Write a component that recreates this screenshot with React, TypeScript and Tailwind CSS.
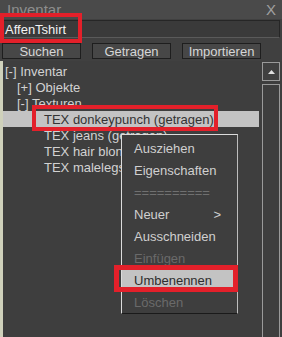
export default function App() {
  const tree = [
    { label: '[-] Inventar', indent: 'pl-[2px]' },
    { label: '[+] Objekte', indent: 'pl-[14px]' },
    { label: '[-] Texturen', indent: 'pl-[14px]' },
    { label: 'TEX donkeypunch (getragen)', indent: 'pl-[41px]', selected: true },
    { label: 'TEX jeans (getragen)', indent: 'pl-[41px]' },
    { label: 'TEX hair blonde', indent: 'pl-[41px]' },
    { label: 'TEX malelegs', indent: 'pl-[41px]' },
  ];

  const menu = [
    { label: 'Ausziehen' },
    { label: 'Eigenschaften' },
    { label: '==========', sep: true },
    { label: 'Neuer', arrow: true },
    { label: 'Ausschneiden' },
    { label: 'Einfügen', disabled: true },
    { label: 'Umbenennen', active: true },
    { label: 'Löschen', disabled: true },
  ];

  return (
    <div className="relative w-[282px] h-[337px] overflow-hidden bg-[#404040] font-['Liberation_Sans',Arial,sans-serif] text-[13px] leading-none">
      {/* title bar */}
      <div className="h-[19px] bg-[#4a4a4a] flex items-center justify-between pl-[7px] pr-[6px] text-[#8e8e8e] text-[15px]">
        <span>Inventar</span>
        <span className="text-[#a0a0a0]">X</span>
      </div>

      {/* search field */}
      <div className="ml-[2px] mr-[2px] mt-[1px] h-[18px] bg-[#3a3a3a] border border-[#262626] border-b-[#5a5a5a] flex items-center pl-[2px] text-[#f2f2f2] text-[13px]">
        AffenTshirt
      </div>

      {/* tabs */}
      <div className="mt-[5px] flex gap-[11px] pl-[2px] h-[16px]">
        {['Suchen', 'Getragen', 'Importieren'].map(t => (
          <div key={t} className="w-[79px] h-full bg-[#474747] border border-[#1e1e1e] flex items-center justify-center text-[#d6d6d6]">
            {t}
          </div>
        ))}
      </div>

      {/* tree + scrollbar */}
      <div className="flex mt-[2px] h-[277px]">
        <div className="w-[3px] bg-[#cfd1bb]" />
        <div className="flex-1 bg-[#3e3e3e] pt-[2px]">
          {tree.map(r => (
            <div
              key={r.label}
              className={`h-[16px] flex items-center whitespace-nowrap ${r.indent} ${r.selected ? 'bg-[#c3c3c3] text-[#333333] mr-[2px]' : 'text-[#d2d2d2]'}`}
            >
              {r.label}
            </div>
          ))}
        </div>
        <div className="w-[21px] bg-[#3e3e3e] flex flex-col pl-[1px] pr-[2px] pt-[1px] gap-[3px]">
          <div className="h-[19px] border border-[#9a9a9a] bg-[#404040] flex items-center justify-center">
            <svg width="7" height="4" viewBox="0 0 7 4"><path d="M0 4 L3.5 0 L7 4 Z" fill="#e0e0e0" /></svg>
          </div>
          <div className="flex-1 border-l border-r border-t border-[#9a9a9a]" />
        </div>
      </div>

      {/* context menu */}
      <div className="absolute left-[121px] top-[134px] w-[117px] h-[180px] bg-[#3e3e3e] border border-[#dcdcdc] border-b-[#1a1a1a] border-r-[#bdbdbd] pt-[2px] pr-[2px] z-10">
        {menu.map(m => (
          <div
            key={m.label}
            className={`h-[22px] flex items-center justify-between pl-[12px] pr-[14px] text-[13px] ${
              m.active ? 'bg-[#c3c3c3] text-[#2e2e2e]' : m.disabled ? 'text-[#6a6a6a]' : m.sep ? 'text-[#707070] text-[12px]' : 'text-[#d0d0d0]'
            }`}
          >
            <span>{m.label}</span>
            {m.arrow && <span>&gt;</span>}
          </div>
        ))}
      </div>

      {/* red annotation boxes */}
      <div className="absolute left-0 top-[13px] w-[82px] h-[30px] border-[4px] border-[#e3202a] z-20" />
      <div className="absolute left-[32px] top-[105px] w-[186px] h-[26px] border-[4px] border-[#e3202a] z-20" />
      <div className="absolute left-[114px] top-[265px] w-[124px] h-[27px] border-[5px] border-[#e3202a] z-20" />
    </div>
  );
}
